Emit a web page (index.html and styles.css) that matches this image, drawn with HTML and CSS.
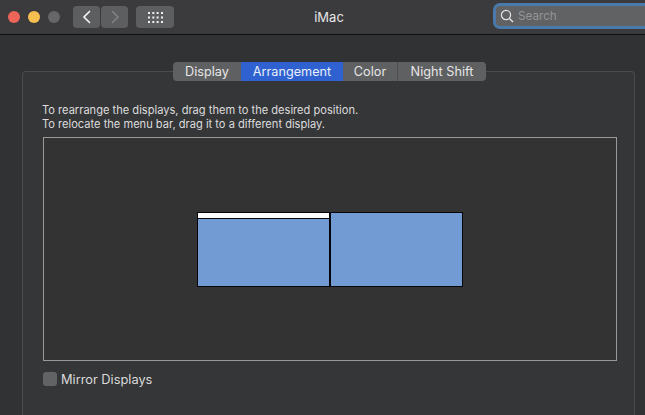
FILE: index.html
```html
<!DOCTYPE html>
<html lang="en">
<head>
<meta charset="utf-8">
<title>iMac</title>
<link rel="stylesheet" href="styles.css">
</head>
<body>
<div class="window">
  <header class="titlebar">
    <div class="lights">
      <span class="light red"></span>
      <span class="light yellow"></span>
      <span class="light gray"></span>
    </div>
    <div class="nav">
      <button class="tool nav-btn"><svg width="10" height="16" viewBox="0 0 10 16"><path d="M8 2 2 8l6 6" fill="none" stroke="#f0f0f0" stroke-width="1.7"/></svg></button>
      <button class="tool nav-btn"><svg width="10" height="16" viewBox="0 0 10 16"><path d="M2 2l6 6-6 6" fill="none" stroke="#808082" stroke-width="1.7"/></svg></button>
    </div>
    <button class="tool grid-btn">
      <svg width="15" height="11" viewBox="0 0 15 11" fill="#f0f0f0"><rect x="0" y="0" width="2" height="2"/><rect x="4.3" y="0" width="2" height="2"/><rect x="8.6" y="0" width="2" height="2"/><rect x="13" y="0" width="2" height="2"/><rect x="0" y="4.5" width="2" height="2"/><rect x="4.3" y="4.5" width="2" height="2"/><rect x="8.6" y="4.5" width="2" height="2"/><rect x="13" y="4.5" width="2" height="2"/><rect x="0" y="9" width="2" height="2"/><rect x="4.3" y="9" width="2" height="2"/><rect x="8.6" y="9" width="2" height="2"/><rect x="13" y="9" width="2" height="2"/></svg>
    </button>
    <div class="title">iMac</div>
    <div class="search">
      <svg width="14" height="14" viewBox="0 0 14 14"><circle cx="6" cy="6" r="4.6" fill="none" stroke="#e4e4e4" stroke-width="1.2"/><path d="M9.4 9.4 13 13" stroke="#e4e4e4" stroke-width="1.4"/></svg>
      <span>Search</span>
    </div>
  </header>
  <main class="content">
    <section class="panel">
      <nav class="tabs">
        <span class="tab tab-display">Display</span>
        <span class="tab tab-arr active">Arrangement</span>
        <span class="tab tab-color">Color</span>
        <span class="tab tab-night">Night Shift</span>
      </nav>
      <p class="help">To rearrange the displays, drag them to the desired position.<br>To relocate the menu bar, drag it to a different display.</p>
      <div class="canvas">
        <div class="display d1"><div class="menubar"></div></div>
        <div class="display d2"></div>
      </div>
      <label class="mirror"><span class="check"></span><span class="mirror-label">Mirror Displays</span></label>
    </section>
  </main>
</div>
</body>
</html>
```
FILE: styles.css
```css
* { box-sizing: border-box; }
html, body { margin: 0; height: 100%; overflow: hidden; }
body { background: #313234; font-family: Inter, "Liberation Sans", sans-serif; color: #e2e2e3; }
.window { display: flex; flex-direction: column; width: 645px; height: 415px; }
.titlebar {
  display: flex; align-items: center; height: 35px; flex: none; position: relative;
  background: #3b3b3d; border-bottom: 1px solid #0e0e0f; padding-left: 8px;
}
.lights { display: flex; gap: 8px; }
.light { width: 12px; height: 12px; border-radius: 50%; }
.red { background: #ed6459; }
.yellow { background: #f6bf4f; }
.gray { background: #666668; }
.tool { border: 0; padding: 0; margin: 0; background: #5d5e60; height: 22px; display: flex; align-items: center; justify-content: center; border-radius: 4px; }
.nav { display: flex; gap: 1px; margin-left: 13px; }
.nav-btn { width: 27px; }
.grid-btn { width: 38px; margin-left: 8px; }
.title { position: absolute; left: 0; right: 0; top: 9px; text-align: center; font-size: 13px; line-height: 16px; color: #e6e6e7; padding-left: 13px; }
.search {
  position: absolute; left: 493px; top: 3px; width: 170px; height: 26px;
  display: flex; align-items: center; gap: 4px; padding-left: 4px;
  background: #616264; border: 3px solid #4a79ab; border-radius: 7px;
  font-size: 11.7px; color: #949597;
}
.content { flex: 1; padding: 36px 10px 0 22px; min-height: 0; }
.panel {
  height: 100%; border: 1px solid #4a4b4d; border-bottom: 0; border-radius: 4px 4px 0 0;
  background: #353638; padding: 0 17px 0 20px; position: relative;
}
.tabs {
  display: flex; width: 313px; height: 19px; margin: -10px 0 0 130px;
  background: #5f6062; border-radius: 4px; overflow: hidden;
  font-size: 12.7px; line-height: 19px; color: #e6e6e7;
}
.tab { text-align: center; flex: none; }
.tab-display { width: 68px; }
.tab-arr { width: 102px; }
.tab-color { width: 55px; border-right: 1px solid #4c4d4f; }
.tab-night { width: 88px; }
.active { background: #2f62d0; color: #e9eefb; }
.help { margin: 22px 0 0 -1px; font-size: 11.1px; line-height: 14px; color: #dcdcdd; }
.canvas { position: relative; height: 224px; margin: 6px 0 0; border: 1px solid #99999a; background: #333333; }
.display { position: absolute; top: 74px; height: 75px; width: 133px; background: #719bd2; border: 1px solid #05050a; }
.d1 { left: 153px; }
.d2 { left: 286px; }
.menubar { height: 5px; background: #fff; border-bottom: 1px solid #05050a; box-sizing: content-box; }
.mirror { display: flex; align-items: center; gap: 4px; height: 18px; margin-top: 9px; font-size: 12.8px; line-height: 18px; color: #dadadb; }
.mirror-label { margin-top: 2px; }
.check { width: 14px; height: 14px; border-radius: 3px; background: #626365; }
```
